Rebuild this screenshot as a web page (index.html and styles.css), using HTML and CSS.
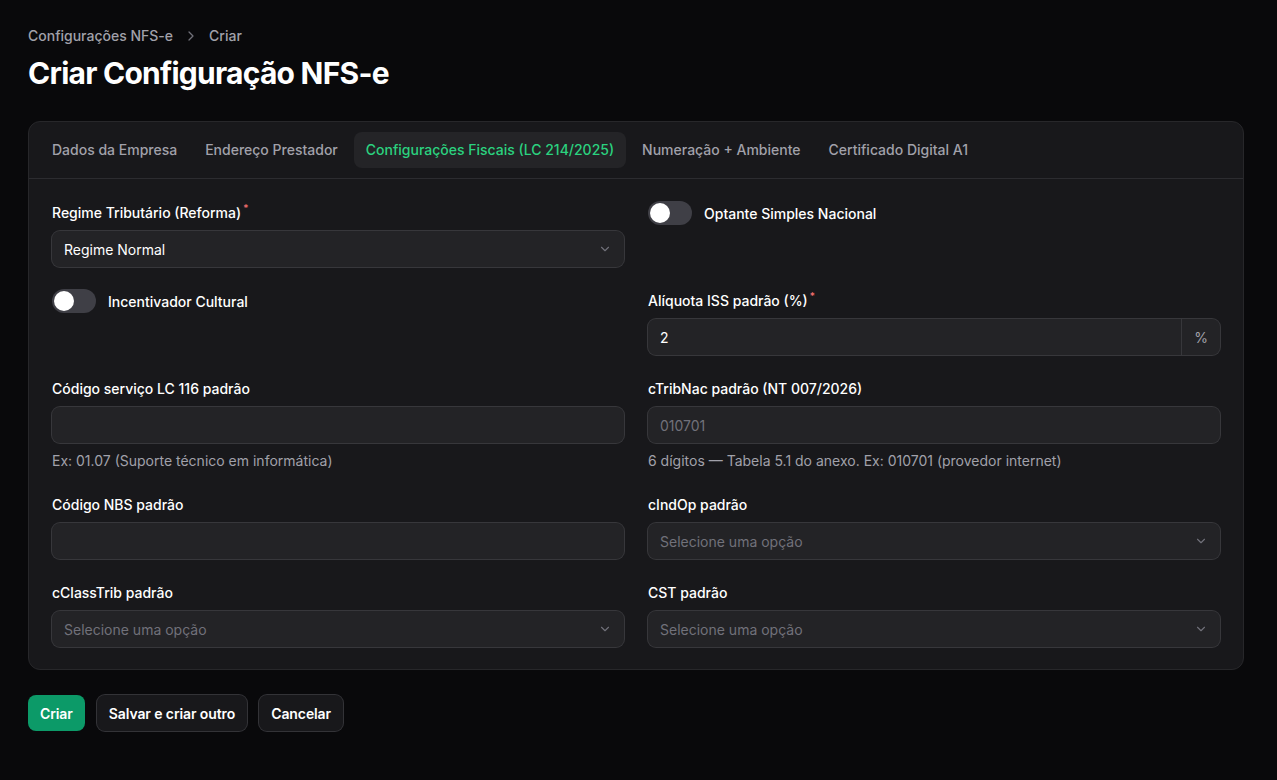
FILE: index.html
```html
<!DOCTYPE html>
<html lang="pt-BR">
<head>
<meta charset="utf-8">
<title>Criar Configuração NFS-e</title>
<link rel="stylesheet" href="styles.css">
</head>
<body>
<main class="page">
  <nav class="breadcrumb">
    <span class="crumb">Configurações NFS-e</span>
    <svg class="crumb-sep" width="16" height="16" viewBox="0 0 20 20" fill="none"><path d="M7.5 5l5 5-5 5" stroke="currentColor" stroke-width="1.6" stroke-linecap="round" stroke-linejoin="round"/></svg>
    <span class="crumb">Criar</span>
  </nav>
  <h1 class="title">Criar Configuração NFS-e</h1>

  <section class="card">
    <div class="tabs">
      <span class="tab">Dados da Empresa</span>
      <span class="tab">Endereço Prestador</span>
      <span class="tab tab-active">Configurações Fiscais (LC 214/2025)</span>
      <span class="tab">Numeração + Ambiente</span>
      <span class="tab">Certificado Digital A1</span>
    </div>
    <div class="form">
      <div class="field">
        <label class="label">Regime Tributário (Reforma)<sup class="req">*</sup></label>
        <div class="input select">
          <span class="value">Regime Normal</span>
          <svg class="chev" width="14" height="14" viewBox="0 0 20 20" fill="none"><path d="M5 7.5l5 5 5-5" stroke="currentColor" stroke-width="1.6" stroke-linecap="round" stroke-linejoin="round"/></svg>
        </div>
      </div>
      <div class="field">
        <div class="toggle-row">
          <span class="toggle"><span class="knob"></span></span>
          <span class="toggle-label">Optante Simples Nacional</span>
        </div>
      </div>

      <div class="field">
        <div class="toggle-row">
          <span class="toggle"><span class="knob"></span></span>
          <span class="toggle-label">Incentivador Cultural</span>
        </div>
      </div>
      <div class="field">
        <label class="label">Alíquota ISS padrão (%)<sup class="req">*</sup></label>
        <div class="input with-suffix">
          <span class="value">2</span>
          <span class="suffix">%</span>
        </div>
      </div>

      <div class="field">
        <label class="label">Código serviço LC 116 padrão</label>
        <div class="input"></div>
        <p class="help">Ex: 01.07 (Suporte técnico em informática)</p>
      </div>
      <div class="field">
        <label class="label">cTribNac padrão (NT 007/2026)</label>
        <div class="input"><span class="placeholder">010701</span></div>
        <p class="help">6 dígitos — Tabela 5.1 do anexo. Ex: 010701 (provedor internet)</p>
      </div>

      <div class="field">
        <label class="label">Código NBS padrão</label>
        <div class="input"></div>
      </div>
      <div class="field">
        <label class="label">cIndOp padrão</label>
        <div class="input select">
          <span class="placeholder">Selecione uma opção</span>
          <svg class="chev" width="14" height="14" viewBox="0 0 20 20" fill="none"><path d="M5 7.5l5 5 5-5" stroke="currentColor" stroke-width="1.6" stroke-linecap="round" stroke-linejoin="round"/></svg>
        </div>
      </div>

      <div class="field">
        <label class="label">cClassTrib padrão</label>
        <div class="input select">
          <span class="placeholder">Selecione uma opção</span>
          <svg class="chev" width="14" height="14" viewBox="0 0 20 20" fill="none"><path d="M5 7.5l5 5 5-5" stroke="currentColor" stroke-width="1.6" stroke-linecap="round" stroke-linejoin="round"/></svg>
        </div>
      </div>
      <div class="field">
        <label class="label">CST padrão</label>
        <div class="input select">
          <span class="placeholder">Selecione uma opção</span>
          <svg class="chev" width="14" height="14" viewBox="0 0 20 20" fill="none"><path d="M5 7.5l5 5 5-5" stroke="currentColor" stroke-width="1.6" stroke-linecap="round" stroke-linejoin="round"/></svg>
        </div>
      </div>
    </div>
  </section>

  <div class="actions">
    <button class="btn btn-primary">Criar</button>
    <button class="btn btn-secondary">Salvar e criar outro</button>
    <button class="btn btn-secondary">Cancelar</button>
  </div>
</main>
</body>
</html>
```

FILE: styles.css
```css
* { box-sizing: border-box; }
html, body { margin: 0; padding: 0; }
body {
  background: #09090b;
  color: #fff;
  font-family: Inter, "Noto Sans", "Liberation Sans", sans-serif;
  font-size: 14px;
  -webkit-font-smoothing: antialiased;
}
.page {
  padding: 26px 33px 40px 28px;
}
.breadcrumb {
  display: flex;
  align-items: center;
  gap: 10px;
  height: 20px;
  line-height: 20px;
  color: #a1a1aa;
  font-weight: 500;
  font-size: 14px;
}
.crumb-sep { color: #71717a; }
.title {
  margin: 9px 0 0;
  font-size: 30px;
  line-height: 36px;
  font-weight: 700;
  letter-spacing: -0.75px;
  color: #fff;
}
.card {
  margin-top: 30px;
  background: #18181b;
  border: 1px solid #27272a;
  border-radius: 12px;
}
.tabs {
  display: flex;
  gap: 4px;
  padding: 10px 11px;
  border-bottom: 1px solid #2c2c30;
}
.tab {
  padding: 0 12px;
  height: 36px;
  line-height: 36px;
  border-radius: 8px;
  color: #a1a1aa;
  font-weight: 500;
  font-size: 14px;
  white-space: nowrap;
}
.tab-active {
  background: #242427;
  color: #2bd27f;
}
.form {
  display: grid;
  grid-template-columns: 1fr 1fr;
  column-gap: 24px;
  row-gap: 22px;
  padding: 22px 23px 22px;
}
.field {
  display: flex;
  flex-direction: column;
}
.label {
  line-height: 24px;
  font-weight: 500;
  font-size: 14px;
  color: #fff;
  margin-bottom: 6px;
}
.req {
  color: #f87171;
  font-size: 10px;
  margin-left: 2px;
  vertical-align: 6px;
  line-height: 0;
}
.input {
  height: 36px;
  border-radius: 8px;
  background: #232326;
  box-shadow: 0 0 0 1px #37373b;
  display: flex;
  align-items: center;
  padding: 0 12px;
  font-size: 14px;
}
.value { color: #fff; }
.placeholder { color: #71717a; }
.select { justify-content: space-between; padding-right: 12px; }
.chev { color: #71717a; }
.with-suffix { padding-right: 0; }
.with-suffix .value { flex: 1; }
.suffix {
  width: 39px;
  height: 100%;
  display: flex;
  align-items: center;
  justify-content: center;
  border-left: 1px solid #37373b;
  color: #a1a1aa;
}
.help {
  margin: 8px 0 0;
  line-height: 20px;
  color: #a1a1aa;
  font-size: 14px;
}
.toggle-row {
  display: flex;
  align-items: center;
  gap: 12px;
  height: 24px;
}
.toggle {
  width: 44px;
  height: 24px;
  border-radius: 12px;
  background: #3f3f46;
  display: flex;
  align-items: center;
  padding: 0 2px;
}
.knob {
  width: 20px;
  height: 20px;
  border-radius: 50%;
  background: #fff;
}
.toggle-label {
  font-weight: 500;
  font-size: 14px;
  color: #fff;
}
.actions {
  display: flex;
  gap: 12px;
  margin-top: 25px;
}
.btn {
  height: 36px;
  padding: 0 12px;
  border: none;
  border-radius: 8px;
  font-family: inherit;
  font-size: 14px;
  font-weight: 600;
  letter-spacing: -0.1px;
  color: #fff;
  cursor: pointer;
}
.btn-primary {
  background: #0c9a68;
}
.btn-secondary {
  background: #18181b;
  box-shadow: 0 0 0 1px #333337;
}
```
